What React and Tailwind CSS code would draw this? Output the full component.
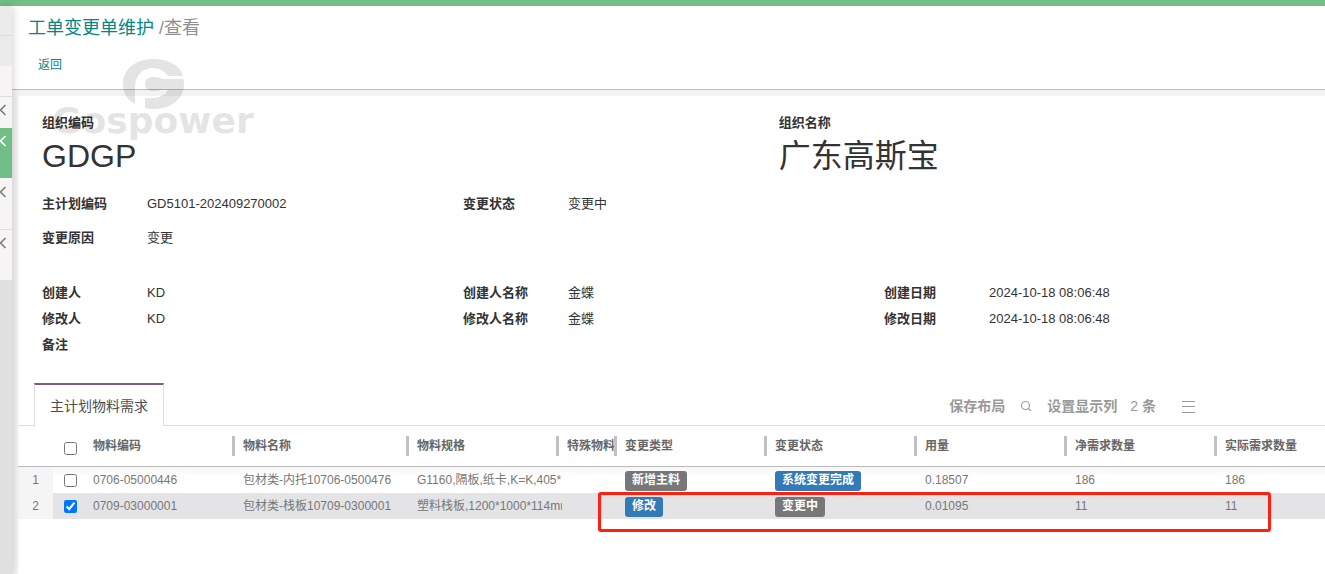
import React, { useState } from "react";
import { Search } from "lucide-react";

const COLUMNS = [
  { key: "code", title: "物料编码", width: "w-[150px]" },
  { key: "name", title: "物料名称", width: "w-[174px]" },
  { key: "spec", title: "物料规格", width: "w-[150px]" },
  { key: "special", title: "特殊物料", width: "w-[58px]" },
  { key: "type", title: "变更类型", width: "w-[150px]" },
  { key: "status", title: "变更状态", width: "w-[150px]" },
  { key: "usage", title: "用量", width: "w-[150px]" },
  { key: "net", title: "净需求数量", width: "w-[150px]" },
  { key: "actual", title: "实际需求数量", width: "" },
];

const ROWS = [
  {
    code: "0706-05000446",
    name: "包材类-内托10706-0500476",
    spec: "G1160,隔板,纸卡,K=K,405*",
    special: "",
    type: <Badge tone="gray">新增主料</Badge>,
    status: <Badge tone="blue">系统变更完成</Badge>,
    usage: "0.18507",
    net: "186",
    actual: "186",
  },
  {
    code: "0709-03000001",
    name: "包材类-栈板10709-0300001",
    spec: "塑料栈板,1200*1000*114mm",
    special: "",
    type: <Badge tone="blue">修改</Badge>,
    status: <Badge tone="gray">变更中</Badge>,
    usage: "0.01095",
    net: "11",
    actual: "11",
  },
];

function Badge({ tone, children }) {
  return (
    <span
      className={`mt-0.5 block h-5 w-fit rounded-[3px] px-[7px] text-xs leading-[18px] font-bold text-white ${
        tone === "blue" ? "bg-[#337ab7]" : "bg-[#777777]"
      }`}
    >
      {children}
    </span>
  );
}

function Chevron() {
  return (
    <svg viewBox="0 0 7 12" className="block h-3 w-[7px]" fill="none" stroke="currentColor" strokeWidth="1.7">
      <path d="M5.5 1 L0.5 6 L5.5 11" />
    </svg>
  );
}

function Sidebar() {
  return (
    <nav aria-label="菜单" className="relative z-10 flex w-3 shrink-0 flex-col bg-[#e0e0e0] shadow-[1px_0_8px_rgba(0,0,0,0.18)]">
      <div className="h-[30px] border-b border-[#dddddd] bg-[#ebebeb]" />
      <div className="h-[30px] bg-[#ebebeb]" />
      <div className="h-[31px] border-b border-[#dddddd] bg-[#f6f4f5]" />
      <button aria-label="展开" className="flex h-[31px] items-start bg-[#f6f4f5] pt-[7px] text-[#808080]">
        <Chevron />
      </button>
      <button aria-label="展开" className="flex h-[50px] items-start bg-[#72be87] pt-[7px] text-white">
        <Chevron />
      </button>
      <button aria-label="展开" className="flex h-[52px] items-start border-b border-[#dddddd] bg-[#f6f4f5] pt-2 text-[#808080]">
        <Chevron />
      </button>
      <button aria-label="展开" className="flex h-[50px] items-start bg-[#f6f4f5] pt-[7px] text-[#808080]">
        <Chevron />
      </button>
    </nav>
  );
}

function Watermark() {
  return (
    <svg
      aria-hidden="true"
      viewBox="0 0 210 90"
      className="pointer-events-none absolute top-[50px] left-[38px] h-[90px] w-[210px] text-black opacity-10"
      fill="currentColor"
    >
      <path d="M85 48 C76 43 73 36 73 28 C73 13 86 3 103 3 C118 3 130 9 133 20 L118 20 C115 15 109 12 103 12 C92 12 85 20 85 31 Z" />
      <path d="M133.500 23 L112 23 C110 21.500 107 21 103 21 C98 21 95 24 95 28 C95 32 98 35 103 35 C106 35 109 34.500 111 34 L118 33.500 C115 40 108 43 95 42 L95 52 C99 53 101 53 104 53 C121 53 134 43 134 28 C134 26 134 25 133.500 23 Z" />
      <text x="2" y="77" fontFamily="DejaVu Sans, sans-serif" fontWeight="700" fontSize="36">
        Gospower
      </text>
    </svg>
  );
}

function Field({ label, children, className = "" }) {
  return (
    <div className={`flex ${className}`}>
      <dt className="w-[105px] shrink-0 font-bold">{label}</dt>
      <dd>{children}</dd>
    </div>
  );
}

function Details() {
  return (
    <div className="pr-5 pl-6 text-[13px] leading-[26px] text-[#333333]">
      <dl className="grid grid-cols-[7fr_5fr] pt-[14px]">
        <div>
          <dt className="font-bold">组织编码</dt>
          <dd className="text-[32px] leading-10">GDGP</dd>
        </div>
        <div>
          <dt className="font-bold">组织名称</dt>
          <dd className="text-[32px] leading-10">广东高斯宝</dd>
        </div>
      </dl>
      <dl className="mt-[15px] grid grid-cols-3 gap-y-2">
        <Field label="主计划编码">GD5101-202409270002</Field>
        <Field label="变更状态">变更中</Field>
        <Field label="变更原因" className="col-start-1">变更</Field>
      </dl>
      <dl className="mt-[29px] grid grid-cols-3">
        <Field label="创建人">KD</Field>
        <Field label="创建人名称">金蝶</Field>
        <Field label="创建日期">2024-10-18 08:06:48</Field>
        <Field label="修改人">KD</Field>
        <Field label="修改人名称">金蝶</Field>
        <Field label="修改日期">2024-10-18 08:06:48</Field>
        <Field label="备注" />
      </dl>
    </div>
  );
}

function TabBar() {
  return (
    <div className="mt-[25px] flex items-end justify-between border-b border-[#dddddd] pr-[130px] pl-4">
      <button className="-mb-px h-[43px] border-x border-t-2 border-x-[#dddddd] border-t-[#875a7b] bg-white px-[15px] text-sm text-[#4c4c4c]">
        主计划物料需求
      </button>
      <div className="flex h-[38px] items-center text-sm font-bold text-[#999999]">
        <button className="mr-[15px]">保存布局</button>
        <button aria-label="搜索" className="mr-[15px]">
          <Search className="size-3" strokeWidth={2.2} />
        </button>
        <button className="mr-[13px]">设置显示列</button>
        <span className="mr-[26px]">
          <span className="font-normal">2</span> 条
        </span>
        <button aria-label="菜单">
          <svg viewBox="0 0 13 13" className="block size-[13px]" stroke="currentColor" strokeWidth="1">
            <path d="M0 1.500H13M0 6.500H13M0 12.500H13" />
          </svg>
        </button>
      </div>
    </div>
  );
}

function MaterialTable() {
  const [checked, setChecked] = useState([false, true]);
  const toggle = (i) => setChecked(checked.map((v, j) => (j === i ? !v : v)));
  const all = checked.every(Boolean);

  return (
    <div className="relative">
      <table className="w-full table-fixed border-separate border-spacing-0 text-left text-xs whitespace-nowrap text-[#777777]">
        <thead>
          <tr className="h-[41px] text-[#666666]">
            <th className="w-[35px] border-b border-[#bbbbbb]" />
            <th className="w-8 border-b border-[#bbbbbb] p-0">
              <input
                type="checkbox"
                aria-label="全选"
                className="mt-1 ml-[11px] block size-[13px]"
                checked={all}
                onChange={() => setChecked(checked.map(() => !all))}
              />
            </th>
            {COLUMNS.map((c) => (
              <th key={c.key} className={`${c.width} group border-b border-[#bbbbbb] p-0 font-bold`}>
                <div className="flex h-5 items-center justify-between pl-2">
                  <span className="overflow-hidden">{c.title}</span>
                  <span className="h-5 w-[3px] shrink-0 bg-[#c1c1c1] group-last:hidden" />
                </div>
              </th>
            ))}
          </tr>
        </thead>
        <tbody>
          {ROWS.map((row, i) => (
            <tr
              key={row.code}
              className={`h-[26px] ${checked[i] ? "bg-[#e4e4e6]" : "bg-linear-to-b from-[#f6f6f6] to-white to-40%"}`}
            >
              <td className="bg-[#f5f5f5] p-0 text-center">{i + 1}</td>
              <td className="p-0">
                <input
                  type="checkbox"
                  aria-label={row.code}
                  className="ml-[11px] block size-[13px]"
                  checked={checked[i]}
                  onChange={() => toggle(i)}
                />
              </td>
              {COLUMNS.map((c) => (
                <td key={c.key} className="p-0 pl-2">
                  {c.key === "spec" ? <div className="w-[145px] overflow-hidden">{row.spec}</div> : row[c.key]}
                </td>
              ))}
            </tr>
          ))}
        </tbody>
      </table>
      <div className="pointer-events-none absolute top-[66px] left-[580px] h-10 w-[673px] rounded-[3px] border-3 border-[#ff2010]" />
    </div>
  );
}

export default function App() {
  return (
    <div className="flex min-h-screen flex-col overflow-hidden bg-white font-['Liberation_Sans','Noto_Sans_CJK_SC',sans-serif]">
      <div className="h-1.5 bg-[#72be87]" />
      <div className="flex grow">
        <Sidebar />
        <main className="relative flex min-w-0 grow flex-col bg-[#f3f3f3]">
          <header className="h-[84px] border-b border-[#bbbbbb] bg-white pl-4">
            <h1 className="pt-[9px] text-lg leading-[26px] text-[#008784]">
              <a href="#list">工单变更单维护</a> <span className="text-[#8f8f8f]">/查看</span>
            </h1>
            <button className="mt-[14px] ml-[10px] block text-xs leading-5 text-[#008784]">返回</button>
          </header>
          <section className="mt-1.5 ml-1.5 grow bg-white">
            <Details />
            <TabBar />
            <MaterialTable />
          </section>
          <Watermark />
        </main>
      </div>
    </div>
  );
}
